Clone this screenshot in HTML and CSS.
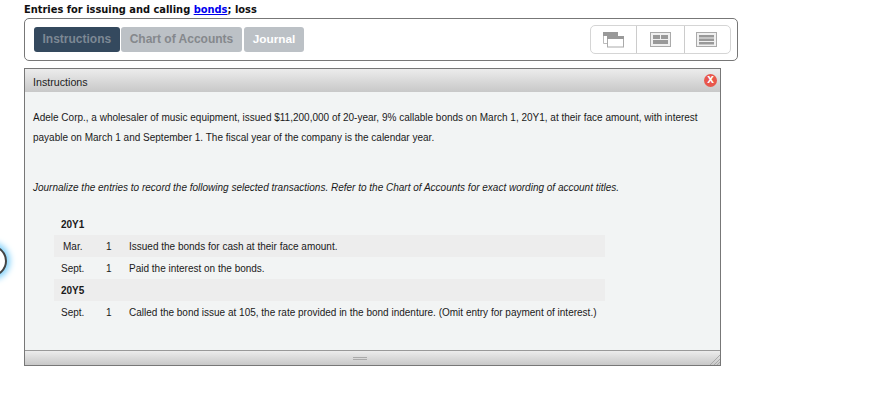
FILE: index.html
```html
<!DOCTYPE html>
<html>
<head>
  <meta name="viewport" content="width=device-width, initial-scale=1.0">
  <link rel="stylesheet" href="styles.css">
</head>
<body>
  <div class="help-ring"></div>
  <div class="page">
    <div class="title">Entries for issuing and calling <a href="#">bonds</a>; loss</div>

    <div class="toolbar">
      <div class="tabs">
        <div class="tab active">Instructions</div>
        <div class="tab">Chart of Accounts</div>
        <div class="tab journal">Journal</div>
      </div>
      <div class="views">
        <div class="view">
          <svg width="21" height="16" viewBox="0 0 21 16">
            <path d="M.5 3v8.5H4" fill="none" stroke="#bbb"/>
            <rect x="0" y="0" width="15" height="4" fill="#999"/>
            <rect x="4.5" y="4.5" width="16" height="10.5" fill="#fff" stroke="#aaa"/>
            <rect x="4" y="4" width="17" height="3" fill="#999"/>
          </svg>
        </div>
        <div class="view">
          <svg width="21" height="16" viewBox="0 0 21 16">
            <rect x="0.5" y="0.5" width="20" height="14" fill="#f0f0f0" stroke="#aaa"/>
            <rect x="3" y="3" width="7" height="4" fill="#999"/>
            <rect x="11" y="3" width="7" height="4" fill="#999"/>
            <rect x="3" y="8" width="15" height="4" fill="#999"/>
          </svg>
        </div>
        <div class="view">
          <svg width="21" height="16" viewBox="0 0 21 16">
            <rect x="0.5" y="0.5" width="20" height="14" fill="#f0f0f0" stroke="#aaa"/>
            <rect x="3" y="3" width="15" height="2.5" fill="#999"/>
            <rect x="3" y="6.5" width="15" height="2.5" fill="#999"/>
            <rect x="3" y="10" width="15" height="2.5" fill="#999"/>
          </svg>
        </div>
      </div>
    </div>

    <div class="panel">
      <div class="panel-head">
        <span>Instructions</span>
        <span class="close">x</span>
      </div>
      <div class="panel-body">
        <p class="intro">Adele Corp., a wholesaler of music equipment, issued $11,200,000 of 20-year, 9% callable bonds on March 1, 20Y1, at their face amount, with interest payable on March 1 and September 1. The fiscal year of the company is the calendar year.</p>
        <p class="task">Journalize the entries to record the following selected transactions. Refer to the Chart of Accounts for exact wording of account titles.</p>
        <div class="rows">
          <div class="row year">20Y1</div>
          <div class="row shade"><span class="month mar">Mar.</span><span class="day">1</span><span>Issued the bonds for cash at their face amount.</span></div>
          <div class="row"><span class="month">Sept.</span><span class="day">1</span><span>Paid the interest on the bonds.</span></div>
          <div class="row year shade">20Y5</div>
          <div class="row"><span class="month">Sept.</span><span class="day">1</span><span>Called the bond issue at 105, the rate provided in the bond indenture. (Omit entry for payment of interest.)</span></div>
        </div>
      </div>
      <div class="panel-foot">
        <span class="grip"></span>
        <svg class="corner" width="11" height="11" viewBox="0 0 11 11">
          <path d="M11 1L1 11M11 5L5 11M11 8L8 11" stroke="#aaa" fill="none"/>
        </svg>
      </div>
    </div>
  </div>
</body>
</html>
```

FILE: styles.css
```css
* {
  box-sizing: border-box;
}
body {
  margin: 0;
  background: #fff;
  font-family: "Liberation Sans", Arial, sans-serif;
  font-size: 10px;
  color: #1a1a1a;
  overflow: hidden;
}
.page {
  width: 738px;
  margin-left: 24px;
  padding-top: 2px;
}
.title {
  font-family: "DejaVu Sans", Verdana, sans-serif;
  font-size: 9.9px;
  font-weight: bold;
  line-height: 13px;
  padding-top: 1px;
  margin-bottom: -1px;
  color: #111;
}
.title a {
  color: #00e;
  text-decoration: underline;
}
.toolbar {
  display: flex;
  justify-content: space-between;
  align-items: center;
  width: 714px;
  height: 43px;
  margin-top: 3px;
  padding: 0 6px 0 9px;
  border: 1px solid #777;
  border-radius: 5px;
}
.tabs {
  display: flex;
  gap: 1px;
}
.tab {
  height: 25px;
  padding: 0 9px;
  border-radius: 3px;
  background: #bcc1c6;
  color: #85888c;
  font-size: 12px;
  font-weight: bold;
  line-height: 24px;
}
.tab.active {
  padding: 0 8.5px;
  background: #34495e;
  color: #7d8894;
}
.tab.journal {
  width: 60px;
  margin-left: 1px;
  padding: 0 8.5px;
  color: #fff;
  font-size: 11.8px;
}
.views {
  display: flex;
  height: 29px;
  padding-right: 3px;
  border: 1px solid #d5d5d5;
  border-radius: 5px;
}
.view {
  display: flex;
  align-items: center;
  justify-content: center;
  width: 48px;
  border-left: 1px solid #ccc;
}
.view:first-child {
  width: 45px;
  border-left: none;
}
.view:last-child {
  width: 43px;
}
.panel {
  width: 697px;
  height: 298px;
  margin-top: 7px;
  display: flex;
  flex-direction: column;
  border: 1px solid #777;
  background: #f2f4f4;
}
.panel-head {
  display: flex;
  justify-content: space-between;
  align-items: center;
  height: 23px;
  padding: 0 3px 0 8px;
  background: linear-gradient(#ececec, #c8c8c8);
  font-size: 10.7px;
  color: #222;
}
.panel-head span:first-child {
  padding-top: 2px;
}
.close {
  width: 13px;
  height: 13px;
  border-radius: 50%;
  background: #e8574c;
  color: #fff;
  font-size: 12px;
  font-weight: bold;
  line-height: 11px;
  text-align: center;
}
.panel-body {
  flex: 1;
  padding: 0 8px;
}
.intro {
  margin: 16px 0 0;
  line-height: 20px;
}
.task {
  margin: 30px 0 0;
  font-style: italic;
  line-height: 20px;
}
.rows {
  width: 551px;
  margin: 15px 0 0 21px;
}
.row {
  display: flex;
  height: 22px;
  align-items: center;
  padding-left: 7px;
}
.row.shade {
  background: #ededed;
}
.row.year {
  font-weight: bold;
}
.month {
  width: 36px;
}
.month.mar {
  padding-left: 2px;
}
.day {
  width: 32px;
  padding-left: 9px;
}
.panel-foot {
  position: relative;
  display: flex;
  align-items: center;
  height: 15px;
  padding-left: 328px;
  border-top: 1px solid #999;
  background: linear-gradient(#ececec, #c8c8c8);
}
.grip {
  width: 14px;
  height: 3px;
  border-top: 1px solid #aaa;
  border-bottom: 1px solid #aaa;
}
.corner {
  position: absolute;
  right: 0;
  bottom: 0;
}
.help-ring {
  position: absolute;
  left: -26px;
  top: 245px;
  width: 33px;
  height: 32px;
  border: 2px solid #444;
  border-radius: 50%;
  background: #fff;
  box-shadow: 0 0 6px 3px #7fd0fa;
}
```
